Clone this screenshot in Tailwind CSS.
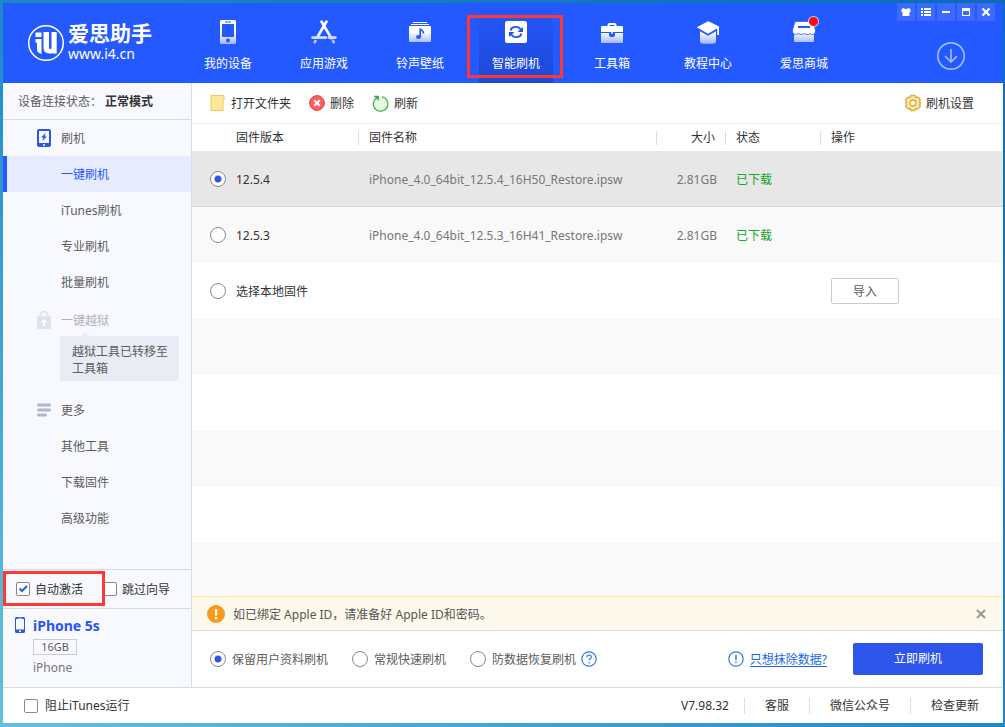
<!DOCTYPE html>
<html lang="zh-CN">
<head>
<meta charset="utf-8">
<title>爱思助手</title>
<script src="https://cdn.jsdelivr.net/npm/@tailwindcss/browser@4"></script>
</head>
<body class="h-screen overflow-hidden bg-linear-to-tr from-[#62c2da] via-[#1b88c9] to-[#0a6cb8] pt-[3px] pr-[2px] pb-1 pl-[3px] font-['Noto_Sans','Noto_Sans_CJK_SC',sans-serif] text-xs text-[#333]">
<div class="relative flex h-full flex-col bg-white">

  <header class="relative flex h-20 shrink-0 items-stretch bg-[#2459ff] text-white">
    <a href="#" class="flex w-[177px] items-center gap-[3px] pl-6" aria-label="爱思助手">
      <svg class="size-[38px] shrink-0" viewBox="0 0 38 38" fill="none">
        <circle cx="19" cy="19" r="17.3" stroke="#fff" stroke-width="1.5"/>
        <path d="M8.500 8.500h6v4.500h-6zM8.500 15h6v15c-3-1-4.500-2-4.500-5v-6.500h-1.500z" fill="#fff"/>
        <path d="M16.500 8h5.500v15.500c0 1 .5 1.500 1.300 1.500s1.200-.5 1.200-1.500V8h5.200v21.500h-5.200c-5.500 0-8-1.500-8-6z" fill="#fff"/>
      </svg>
      <span class="flex flex-col pb-0.5">
        <span class="text-[21px] leading-6 font-bold whitespace-nowrap">爱思助手</span>
        <span class="text-sm leading-[18px]">www.i4.cn</span>
      </span>
    </a>
    <nav class="flex text-center leading-4">
      <a href="#" class="flex w-24 flex-col items-center gap-[11px] pt-4">
        <svg class="size-[26px]" viewBox="0 0 26 26"><defs><linearGradient id="g" x1="0" y1="0" x2="0" y2="26" gradientUnits="userSpaceOnUse"><stop offset=".5" stop-color="#fff"/><stop offset="1" stop-color="#94adff"/></linearGradient></defs><path fill="url(#g)" fill-rule="evenodd" d="M6.500 1h13a1.500 1.500 0 0 1 1.500 1.500v21a1.500 1.500 0 0 1-1.500 1.500h-13A1.500 1.500 0 0 1 5 23.500v-21A1.500 1.500 0 0 1 6.500 1zM7 5v13h12V5zM10 2.500v1h6v-1zM13 19.500a2 2 0 1 0 0 4 2 2 0 0 0 0-4z"/></svg>
        <span>我的设备</span></a>
      <a href="#" class="flex w-24 flex-col items-center gap-[11px] pt-4">
        <svg class="size-[26px]" viewBox="0 0 26 26" fill="none" stroke="url(#g)" stroke-width="2.600" stroke-linecap="round"><path d="M10.500 2.500 20.500 19.500M15.500 2.500 6.500 18M1.500 18.600H15M18 18.600h6.500M4.500 22l-.8 1.300M22 22l.8 1.300"/></svg>
        <span>应用游戏</span></a>
      <a href="#" class="flex w-24 flex-col items-center gap-[11px] pt-4">
        <svg class="size-[26px]" viewBox="0 0 26 26"><path fill="#fff" d="M6 3h14v1H6zM4 5h18v1H4z"/><path fill="url(#g)" d="M3 7h20a1 1 0 0 1 1 1v14a1 1 0 0 1-1 1H3a1 1 0 0 1-1-1V8a1 1 0 0 1 1-1z"/><ellipse cx="11.500" cy="18" rx="2.500" ry="2" fill="#2459ff"/><path d="M13.200 18V9.500c.6 2.200 3.600 2 3.300 5" fill="none" stroke="#2459ff" stroke-width="1.700"/></svg>
        <span>铃声壁纸</span></a>
      <a href="#" aria-current="page" class="mx-[11px] flex w-[74px] flex-col items-center gap-[11px] bg-linear-to-b from-[#2459ff] to-[#1e48d6] pt-4">
        <svg class="size-[26px]" viewBox="0 0 26 26" fill="none"><rect x="2" y="2" width="22" height="22" rx="2" fill="#fff"/><g stroke="#2352ea" stroke-width="1.800"><path d="M7.500 11.500c1-4 7.500-5.200 10.200-1M18.500 14.500c-1 4-7.500 5.200-10.200 1"/></g><path fill="#2352ea" d="M20 8v5h-5.500zM6 18v-5h5.500z"/></svg>
        <span>智能刷机</span></a>
      <a href="#" class="flex w-24 flex-col items-center gap-[11px] pt-4">
        <svg class="size-[26px]" viewBox="0 0 26 26"><path fill="none" stroke="#fff" stroke-width="2" d="M9.500 8V6q0-1 1-1h5q1 0 1 1v2"/><path fill="#fff" d="M3 7h20a1 1 0 0 1 1 1v5H2V8a1 1 0 0 1 1-1z"/><path fill="url(#g)" d="M2 14h8v2q0 2 3 2t3-2v-2h8v9a1 1 0 0 1-1 1H3a1 1 0 0 1-1-1z"/><path fill="#2459ff" d="M11 13h4v2.500q-2 2-4 0z"/><path fill="#fff" d="M12.300 13h1.400v2h-1.400z"/></svg>
        <span>工具箱</span></a>
      <a href="#" class="flex w-24 flex-col items-center gap-[11px] pt-4">
        <svg class="size-[26px]" viewBox="0 0 26 26"><path fill="url(#g)" d="M5 10h16v12q0 2.700-3 2.700H8Q5 24.700 5 22z"/><path fill="#fff" d="M13 2 24 7.500V16h-1.800V9z"/><path fill="#2459ff" d="M5 9h16v3.200l-8 4.600-8-4.600z"/><path fill="#fff" d="M13 2.200 24.200 8.300 13 14.800 1.800 8.300z"/></svg>
        <span>教程中心</span></a>
      <a href="#" class="relative flex w-24 flex-col items-center gap-[11px] pt-4">
        <svg class="size-[26px]" viewBox="0 0 26 26"><path fill="url(#g)" d="M3 14h20v8q0 1-1 1H4q-1 0-1-1z"/><path fill="#fff" stroke="#2459ff" stroke-width=".8" d="M5.500 2.500h15q1.500 0 2 1.500l2 7v1q0 3-2.500 3.500-1.500.2-3-1-1.500 1.500-3 1t-3-1q-1.500 1.500-3 1t-3-1q-1.500 1.300-3 1Q1.500 15 1.500 12v-1l2-7q.5-1.500 2-1.500z"/><path fill="#2459ff" d="M7 7h12v2H7z"/></svg>
        <span>爱思商城</span>
        <i class="absolute top-3.5 left-[53px] size-[9px] rounded-full bg-[#ff0a0a] ring-1 ring-white/70"></i></a>
    </nav>
    <div class="ml-auto flex flex-col items-end pr-2">
      <div class="flex gap-0.5">
        <button aria-label="皮肤" class="grid size-[18px] place-items-center bg-white/10"><svg class="size-3" viewBox="0 0 12 12" fill="#fff"><path d="M3.500 2Q6 4 8.500 2L10.500 3v3H9.500v4h-7V6h-1V3z"/></svg></button>
        <button aria-label="菜单" class="grid size-[18px] place-items-center bg-white/10"><svg class="size-3" viewBox="0 0 12 12" fill="#fff"><path d="M1 2h2v2H1zM4 2h7v2H4zM1 5h2v2H1zM4 5h7v2H4zM1 8h2v2H1zM4 8h7v2H4z"/></svg></button>
        <button aria-label="最小化" class="grid size-[18px] place-items-center bg-white/10"><svg class="size-3" viewBox="0 0 12 12" fill="#fff"><path d="M2 5h8v2H2z"/></svg></button>
        <button aria-label="最大化" class="grid size-[18px] place-items-center bg-white/10"><svg class="size-3" viewBox="0 0 12 12" fill="#fff" fill-rule="evenodd"><path d="M2 2h8v8H2zM3 5v4h6V5z"/></svg></button>
        <button aria-label="关闭" class="grid size-[18px] place-items-center bg-white/10"><svg class="size-3" viewBox="0 0 12 12" stroke="#fff" stroke-width="2.200"><path d="M2.500 2.500l7 7M9.500 2.500l-7 7"/></svg></button>
      </div>
      <button aria-label="下载" class="mt-5 mr-[29px]"><svg class="size-[30px]" viewBox="0 0 30 30" fill="none" stroke="#a2b9ff" stroke-width="1.700"><circle cx="15" cy="15" r="13.200"/><path d="M15 8v13M9 15l6 6 6-6"/></svg></button>
    </div>
    <i class="pointer-events-none absolute top-3 left-[464px] h-[63px] w-24 border-3 border-[#fd3835]"></i>
  </header>

  <div class="flex min-h-0 flex-1">
    <aside class="flex w-[189px] shrink-0 flex-col border-r border-[#d9dbe3] bg-[#f8f9ff] text-[#5c5c5c]">
      <p class="flex h-[37px] shrink-0 items-center border-b border-[#dadbdf] pt-0.5 pl-[15px]">设备连接状态：<b class="ml-[3px] text-[#333]">正常模式</b></p>
      <nav class="flex-1 *:flex *:h-9 *:items-center">
        <a href="#" class="gap-2.5 pl-[34px]"><svg class="h-[18px] w-[14px]" viewBox="0 0 14 18"><path fill="#2d54eb" fill-rule="evenodd" d="M2 0h10a2 2 0 0 1 2 2v14a2 2 0 0 1-2 2H2a2 2 0 0 1-2-2V2a2 2 0 0 1 2-2zM2 2v12h10V2zM6 15.300v1.400h2v-1.400z"/><path fill="#2d54eb" d="M8.500 4 4 8.500h2.300L5.300 12 10 7.500H7.800z"/></svg><span class="pt-0.5">刷机</span></a>
        <a href="#" aria-current="page" class="border-l-4 border-[#2459ff] bg-[#e7ecff] pt-0.5 pl-[54px] text-[#2459ff]">一键刷机</a>
        <a href="#" class="pt-0.5 pl-[58px]">iTunes刷机</a>
        <a href="#" class="pt-0.5 pl-[58px]">专业刷机</a>
        <a href="#" class="pt-0.5 pl-[58px]">批量刷机</a>
        <a href="#" class="mt-0.5 gap-2.5 pl-[34px] text-[#b0b1b8]"><svg class="h-[18px] w-[14px]" viewBox="0 0 14 18"><path d="M3.500 7V4a3.200 3.200 0 0 1 7 0V7" fill="none" stroke="#dfe1ee" stroke-width="1.800"/><rect y="5" width="14" height="13" rx="2" fill="#dfe1ee"/><path fill="#fff" d="M7 8l3.500 3.500H8V15H6v-3.500H3.500z"/></svg><span class="pt-0.5">一键越狱</span></a>
        <p class="relative -mt-0.5 mr-3 ml-[57px] h-[45px]! rounded-xs bg-[#e9ebf5] pt-0.5 pr-2 pl-3 leading-[17px]">越狱工具已转移至工具箱<svg class="absolute -top-1 left-[21px] h-1 w-2" viewBox="0 0 8 4"><path fill="#e9ebf5" d="M4 0l4 4H0z"/></svg></p>
        <a href="#" class="mt-[11px] gap-2.5 pl-[34px]"><svg class="h-[18px] w-[14px]" viewBox="0 0 14 18" stroke="#b0b6d0" stroke-width="3" stroke-linecap="round"><path d="M1.500 4h11M1.500 9h11M1.500 14h7"/></svg><span class="pt-0.5">更多</span></a>
        <a href="#" class="pt-0.5 pl-[58px]">其他工具</a>
        <a href="#" class="pt-0.5 pl-[58px]">下载固件</a>
        <a href="#" class="pt-0.5 pl-[58px]">高级功能</a>
      </nav>
      <div class="relative flex h-10 shrink-0 items-center gap-5 border-y border-[#d9dbe3] pl-[13px] text-[#333]">
        <label class="flex items-center gap-[5px]"><span class="grid *:[grid-area:1/1]"><input type="checkbox" checked class="size-3.5 appearance-none rounded-xs border border-[#888] bg-white"><svg class="pointer-events-none size-3.5" viewBox="0 0 14 14" fill="none" stroke="#2d5bf0" stroke-width="2"><path d="M3.500 6.500 6 9l5-5"/></svg></span><span class="pt-0.5">自动激活</span></label>
        <label class="flex items-center gap-[5px]"><input type="checkbox" class="size-3.5 appearance-none rounded-xs border border-[#888] bg-white"><span class="pt-0.5">跳过向导</span></label>
        <i class="pointer-events-none absolute top-px left-0 h-[35px] w-[102px] border-3 border-[#fd3835]"></i>
      </div>
      <div class="flex h-[78px] shrink-0 gap-2 pt-2 pl-3">
        <svg class="h-4 w-2.5 shrink-0" viewBox="0 0 10 16"><path fill="#2d54eb" fill-rule="evenodd" d="M1.500 0h7A1.500 1.500 0 0 1 10 1.500v13A1.500 1.500 0 0 1 8.500 16h-7A1.500 1.500 0 0 1 0 14.500v-13A1.500 1.500 0 0 1 1.500 0zM1 2v10.500h8V2zM3 .8v.7h4V.8zM4 13.500v1.500h2v-1.500z"/></svg>
        <div class="flex flex-col items-start">
          <b class="text-sm leading-[18px] text-[#2d54eb]">iPhone 5s</b>
          <span class="mt-1 w-11 border border-[#ccc] text-center text-[11px] leading-[14px]">16GB</span>
          <span class="mt-1 leading-[18px] text-[#777]">iPhone</span>
        </div>
      </div>
    </aside>

    <main class="flex min-w-0 flex-1 flex-col">
      <div class="flex h-[41px] shrink-0 items-center border-b border-[#f0f0f0] pr-[29px] pl-[18px]">
        <button class="flex items-center gap-1.5"><svg class="h-4 w-[15px]" viewBox="0 0 15 16"><path fill="#ffe79b" stroke="#edc95b" d="M1 .5h13v4l-1 1v10H1z"/></svg><span class="pt-0.5">打开文件夹</span></button>
        <button class="ml-[18px] flex items-center gap-[5px]"><svg class="size-4" viewBox="0 0 16 16"><circle cx="8" cy="8" r="7.400" fill="#ff5f60" stroke="#df4045"/><path stroke="#fff" stroke-width="2" d="M5.200 5.200l5.600 5.600M10.800 5.200l-5.600 5.600"/></svg><span class="pt-0.5">删除</span></button>
        <button class="ml-[18px] flex items-center gap-[5px]"><svg class="size-[17px]" viewBox="0 0 17 17"><circle cx="8.500" cy="9" r="7.200" fill="#e5f9e4"/><path fill="none" stroke="#4cb04f" stroke-width="1.300" d="M10 1.700a7.300 7.300 0 1 1-6 1.500"/><path fill="#3fa744" d="M1.500.8h5.300V6z"/></svg><span class="pt-0.5">刷新</span></button>
        <button class="ml-auto flex items-center gap-1"><svg class="size-[18px]" viewBox="0 0 18 18"><path fill="#ffe9ad" stroke="#e0a836" stroke-width="1.300" stroke-linejoin="round" d="M7 1.500h4l.8 2 2.200-.3 2.400 2.600-1 2 1 1.200-1 1.400 1 2-2.400 2.500-2.200-.4-.8 2H7l-.8-2-2.200.4-2.400-2.500 1-2-1-1.400 1-1.200-1-2L4 3.200l2.200.3z"/><circle cx="9" cy="9" r="3" fill="#fff" stroke="#e0a836" stroke-width="1.300"/></svg><span class="pt-0.5">刷机设置</span></button>
      </div>
      <div class="min-h-0 flex-1 overflow-hidden">
        <table class="w-full table-fixed border-collapse text-left">
          <colgroup><col class="w-11"><col class="w-[123px]"><col><col class="w-[69px]"><col class="w-[95px]"><col class="w-[182px]"></colgroup>
          <thead>
            <tr class="h-[27px] *:p-0 *:font-normal">
              <th></th>
              <th><div class="h-3.5 border-r border-[#ddd] leading-3.5">固件版本</div></th>
              <th><div class="h-3.5 border-r border-[#ddd] pl-2.5 leading-3.5">固件名称</div></th>
              <th><div class="h-3.5 border-r border-[#ddd] pr-2.5 text-right leading-3.5">大小</div></th>
              <th><div class="h-3.5 border-r border-[#ddd] pl-2.5 leading-3.5">状态</div></th>
              <th><div class="pl-2.5 leading-3.5">操作</div></th>
            </tr>
          </thead>
          <tbody class="text-[#777]">
            <tr class="h-14 bg-[#e7e7e7] shadow-[inset_0_-1px_0_#d8d8d8]">
              <td class="pl-[18px]"><input id="fw1" name="fw" type="radio" checked class="block size-4 appearance-none rounded-full border border-[#888] bg-white checked:bg-[radial-gradient(circle,#2d54eb_3px,#fff_4px)]"></td>
              <td class="pt-0.5 text-[#333]"><label for="fw1">12.5.4</label></td><td class="pt-0.5 pl-2.5">iPhone_4.0_64bit_12.5.4_16H50_Restore.ipsw</td><td class="pt-0.5 pr-[9px] text-right">2.81GB</td><td class="pt-0.5 pl-2.5 text-[#12a52a]">已下载</td><td></td>
            </tr>
            <tr class="h-14 bg-[#f9f9f9]">
              <td class="pl-[18px]"><input id="fw2" name="fw" type="radio" class="block size-4 appearance-none rounded-full border border-[#888] bg-white checked:bg-[radial-gradient(circle,#2d54eb_3px,#fff_4px)]"></td>
              <td class="pt-0.5 text-[#333]"><label for="fw2">12.5.3</label></td><td class="pt-0.5 pl-2.5">iPhone_4.0_64bit_12.5.3_16H41_Restore.ipsw</td><td class="pt-0.5 pr-[9px] text-right">2.81GB</td><td class="pt-0.5 pl-2.5 text-[#12a52a]">已下载</td><td></td>
            </tr>
            <tr class="h-14">
              <td class="pl-[18px]"><input id="fw3" name="fw" type="radio" class="block size-4 appearance-none rounded-full border border-[#888] bg-white checked:bg-[radial-gradient(circle,#2d54eb_3px,#fff_4px)]"></td>
              <td class="pt-0.5 text-[#333]"><label for="fw3">选择本地固件</label></td><td></td><td></td><td></td><td class="pl-2.5"><button class="block h-[26px] w-[68px] rounded-xs border border-[#ccc] bg-white pt-0.5 text-[#5c5c5c]">导入</button></td>
            </tr>
          </tbody>
        </table>
        <div class="h-14 bg-[#f9f9f9]"></div>
        <div class="h-14"></div>
        <div class="h-14 bg-[#f9f9f9]"></div>
        <div class="h-14"></div>
        <div class="h-14 bg-[#f9f9f9]"></div>
      </div>
      <div class="flex h-[35px] shrink-0 items-center gap-2 border-t border-b border-t-[#fde68f] border-b-[#dadbdf] bg-[#fdf8ec] pr-4 pl-[15px] text-[#555]">
        <svg class="size-[18px]" viewBox="0 0 18 18"><circle cx="9" cy="9" r="9" fill="#f99a1c"/><path fill="#fff" d="M8 4h2.200v6.500H8zM8 12h2.200v2.200H8z"/></svg>
        <span class="pt-0.5">如已绑定 Apple ID，请准备好 Apple ID和密码。</span>
        <button aria-label="关闭提示" class="ml-auto"><svg class="size-3" viewBox="0 0 12 12" stroke="#999793" stroke-width="2"><path d="M2 2l8 8M10 2l-8 8"/></svg></button>
      </div>
      <div class="flex h-14 shrink-0 items-center pr-5 pl-[18px] text-[#5c5c5c]">
        <label class="flex items-center gap-1.5"><input name="mode" type="radio" checked class="size-4 appearance-none rounded-full border border-[#888] bg-white checked:bg-[radial-gradient(circle,#2d54eb_3px,#fff_4px)]"><span class="pt-0.5">保留用户资料刷机</span></label>
        <label class="ml-6 flex items-center gap-1.5"><input name="mode" type="radio" class="size-4 appearance-none rounded-full border border-[#888] bg-white checked:bg-[radial-gradient(circle,#2d54eb_3px,#fff_4px)]"><span class="pt-0.5">常规快速刷机</span></label>
        <label class="ml-6 flex items-center gap-1.5"><input name="mode" type="radio" class="size-4 appearance-none rounded-full border border-[#888] bg-white checked:bg-[radial-gradient(circle,#2d54eb_3px,#fff_4px)]"><span class="pt-0.5">防数据恢复刷机</span></label>
        <button aria-label="帮助" class="ml-[5px]"><svg class="size-4" viewBox="0 0 16 16" fill="none" stroke="#2b79ea" stroke-width="1.200"><circle cx="8" cy="8" r="7.200"/><path d="M5.800 6.300c0-3 4.500-3 4.500-.3 0 1.700-2.200 1.700-2.200 3.600M8.100 11v1.500"/></svg></button>
        <svg class="ml-auto size-4" viewBox="0 0 16 16" fill="none" stroke="#2b79ea" stroke-width="1.200"><circle cx="8" cy="8" r="7.200"/><path stroke-width="1.500" d="M8 4v5M8 10.500V12"/></svg>
        <a href="#" class="ml-1.5 pt-0.5 text-[#1a66ea] underline underline-offset-2">只想抹除数据?</a>
        <button class="ml-[26px] h-8 w-[130px] rounded-xs bg-[#2d54eb] text-white">立即刷机</button>
      </div>
    </main>
  </div>

  <footer class="flex h-9 shrink-0 items-center border-t border-[#dadbdf] pr-6 pl-[21px]">
    <label class="flex items-center gap-[7px]"><input type="checkbox" class="size-3.5 appearance-none rounded-xs border border-[#888] bg-white">阻止iTunes运行</label>
    <div class="ml-auto flex items-center">
      <span class="pr-[15px]">V7.98.32</span>
      <a href="#" class="border-l border-[#ddd] px-5 leading-4">客服</a>
      <a href="#" class="border-l border-[#ddd] px-5 leading-4">微信公众号</a>
      <a href="#" class="border-l border-[#ddd] pl-5 leading-4">检查更新</a>
    </div>
  </footer>
</div>
</body>
</html>
